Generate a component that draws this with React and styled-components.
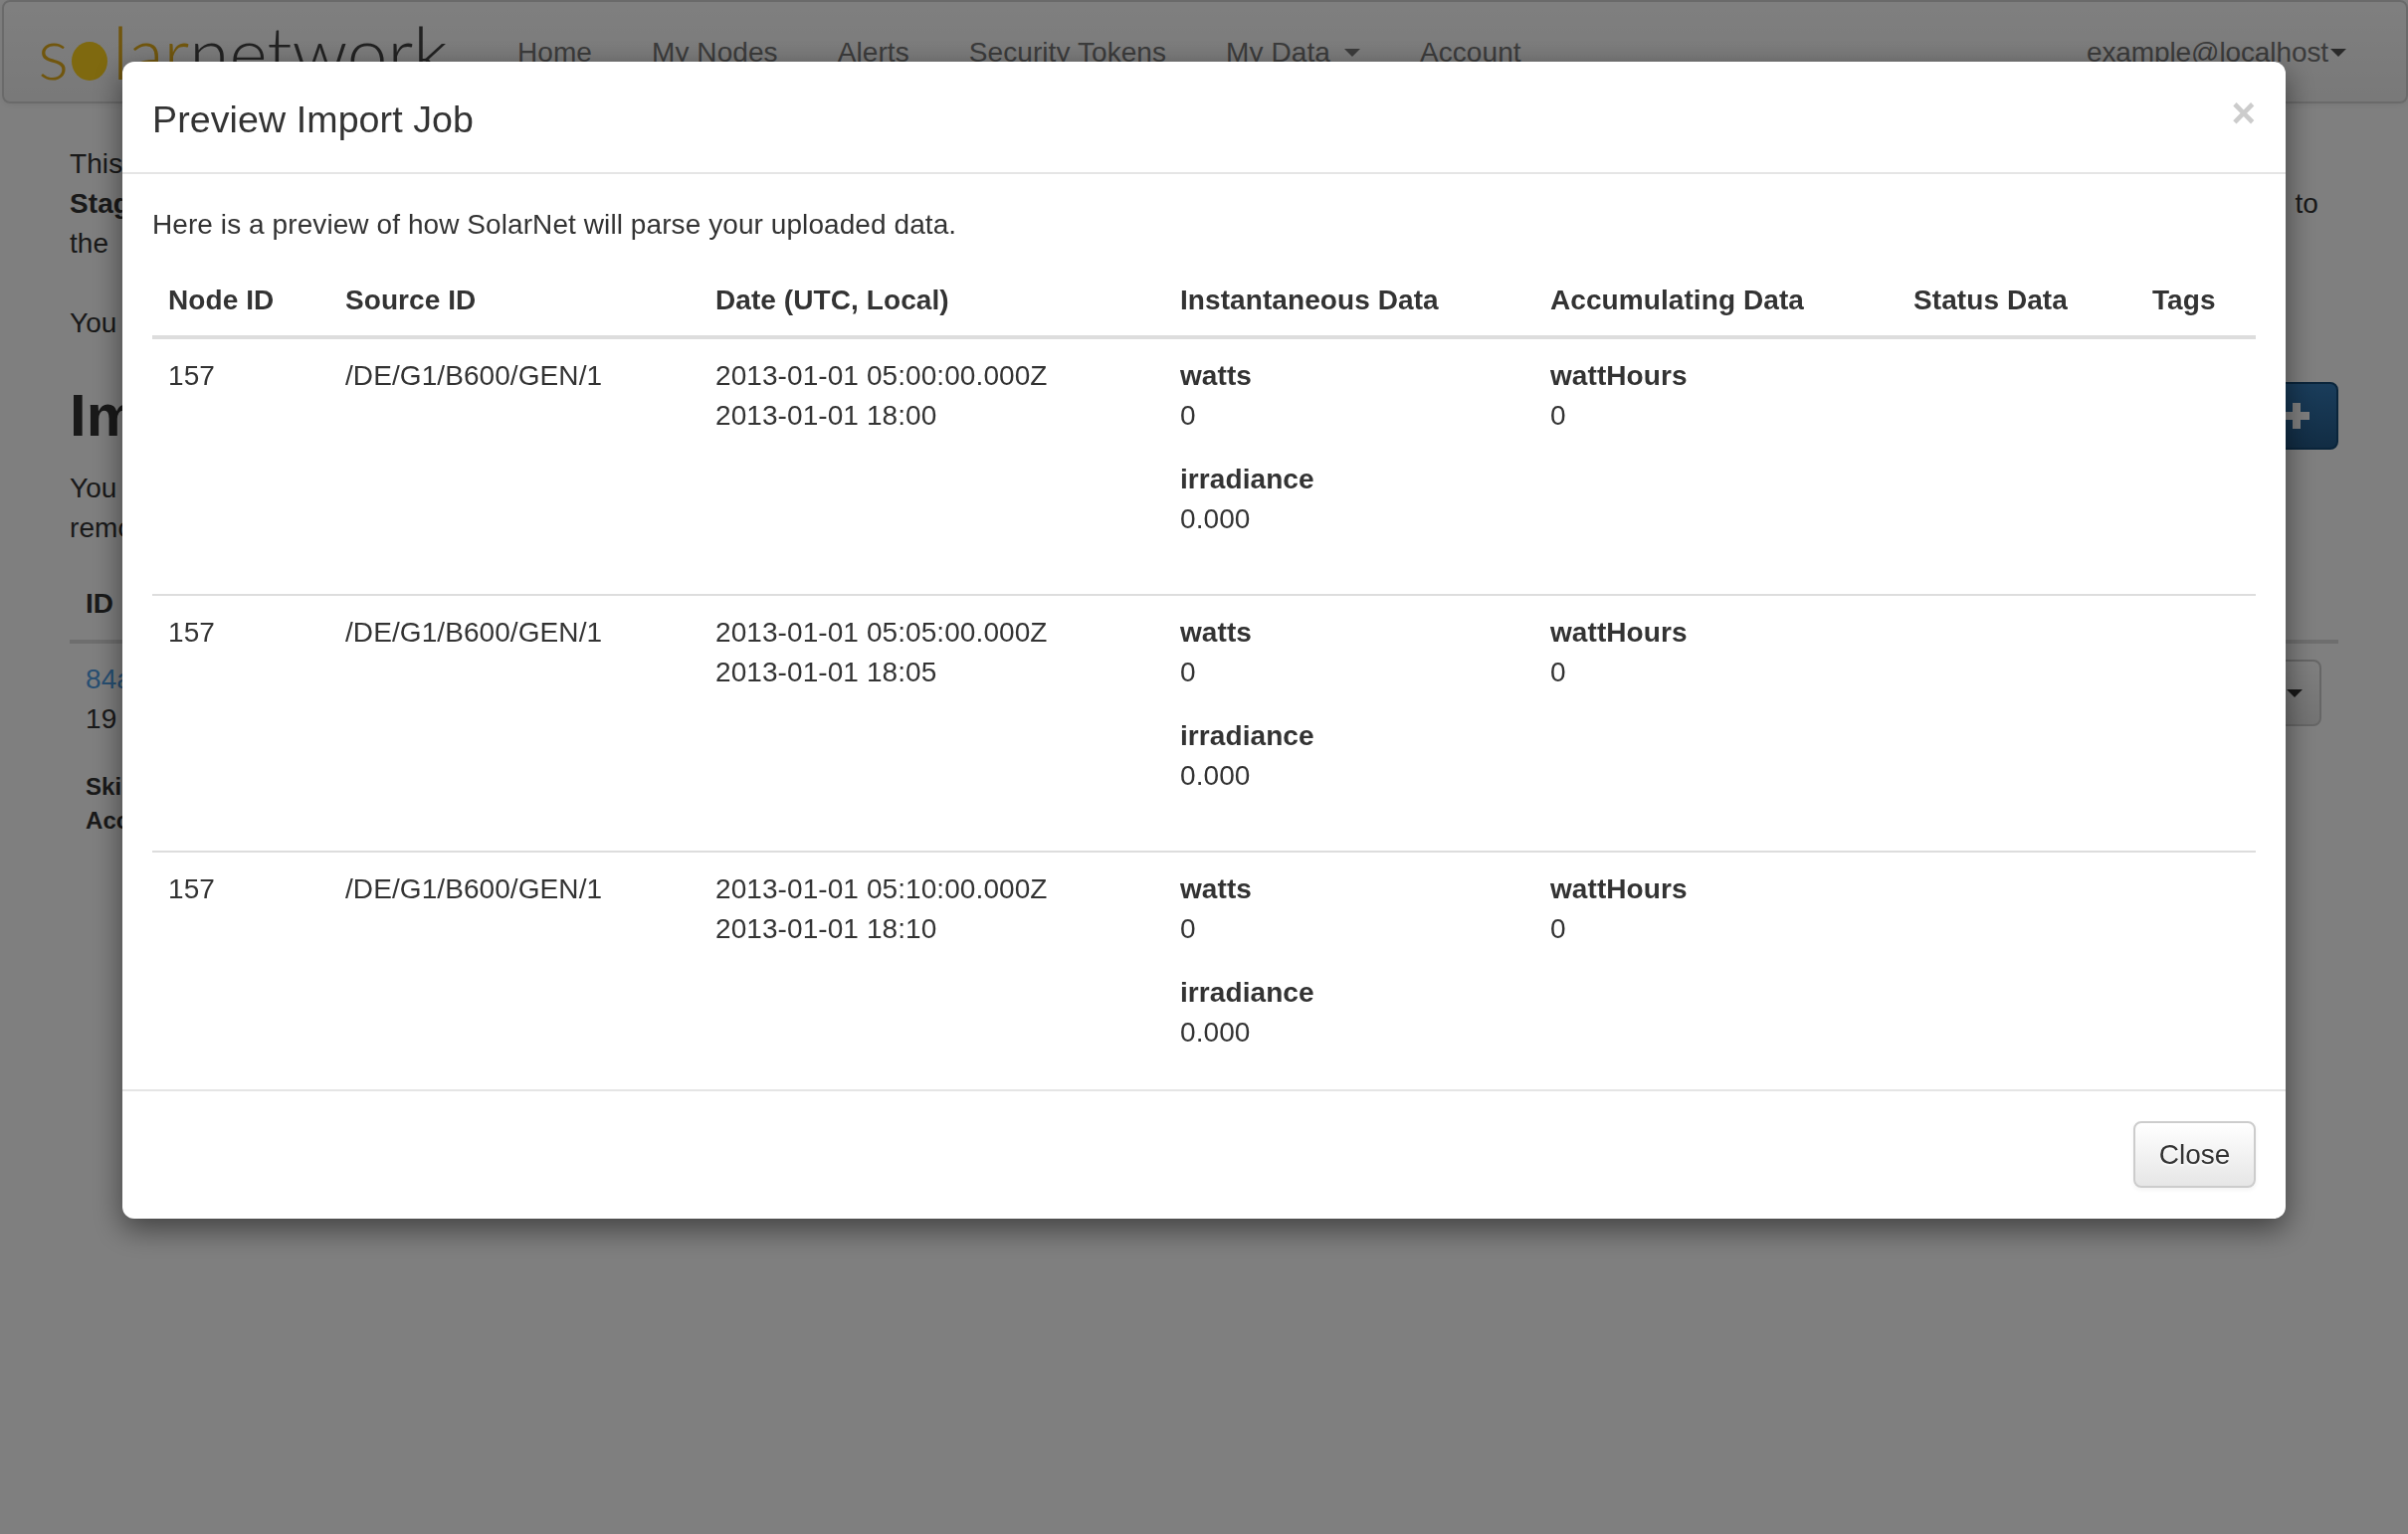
import React from 'react';
import styled, { createGlobalStyle } from 'styled-components';

const GlobalStyle = createGlobalStyle`
  html, body {
    margin: 0;
    padding: 0;
    background: #fff;
    color: #333;
    font-family: "Liberation Sans", Arial, sans-serif;
    font-size: 28px;
    line-height: 40px;
    letter-spacing: 0.08px;
  }
  body {
    height: 1542px;
    overflow: hidden;
  }
`;

const Navbar = styled.nav`
  display: flex;
  align-items: flex-start;
  height: 100px;
  margin: 0 0 0 2px;
  padding-left: 34px;
  border: 2px solid #d4d4d4;
  border-radius: 8px;
  background: linear-gradient(to bottom, #fff, #f2f2f2);
  box-shadow: 0 2px 6px rgba(0, 0, 0, 0.07);
`;

const Logo = styled.div`
  width: 452px;
  height: 100px;
  font-family: Lato, "Liberation Sans", sans-serif;
  font-weight: 300;
  font-size: 73px;
  line-height: 100px;
  letter-spacing: 0;
  color: #444;
  white-space: nowrap;
  span {
    color: #e2ad1c;
  }
`;

const LogoBall = styled.i`
  display: inline-block;
  width: 36px;
  height: 39px;
  margin: 0 5px 0 3px;
  border-radius: 50%;
  background: #ffd21e;
  vertical-align: -1px;
`;

const NavList = styled.div`
  display: flex;
  flex: 1;
  padding-top: 31px;
  color: #777;
`;

const NavItem = styled.a`
  display: flex;
  align-items: center;
  padding: 0 30px;
  white-space: nowrap;
`;

const NavUser = styled(NavItem)`
  margin-left: auto;
  padding-right: 60px;
  letter-spacing: -0.1px;
`;

const Caret = styled.b`
  display: inline-block;
  width: 0;
  height: 0;
  margin-left: ${props => props.$gap || 14}px;
  border-top: 8px solid ${props => props.$color || '#777'};
  border-left: 8px solid transparent;
  border-right: 8px solid transparent;
`;

const Main = styled.main`
  padding: 41px 70px 0;
`;

const Line = styled.div`
  display: flex;
  justify-content: space-between;
`;

const LineEnd = styled.span`
  margin-right: 20px;
`;

const Paragraph = styled.div`
  margin-bottom: ${props => props.$gap || 0}px;
`;

const HeadingRow = styled.div`
  display: flex;
  justify-content: space-between;
  align-items: center;
  margin: 39px 0 19px;
  height: 68px;
`;

const Heading = styled.h2`
  margin: 0;
  font-size: 60px;
  font-weight: 700;
  line-height: 68px;
`;

const AddButton = styled.div`
  display: flex;
  align-items: center;
  justify-content: center;
  width: 84px;
  height: 68px;
  box-sizing: border-box;
  border: 2px solid #154a76;
  border-radius: 8px;
  background: linear-gradient(to bottom, #347ab6, #245a88);
`;

const JobHead = styled.div`
  margin-top: 36px;
  padding: 0 16px 16px;
  border-bottom: 4px solid #ddd;
  font-weight: 700;
`;

const JobBody = styled.div`
  display: flex;
  justify-content: space-between;
  align-items: flex-start;
  padding: 16px 17px 0 16px;
`;

const JobLink = styled.a`
  display: block;
  color: #4f9fe6;
`;

const JobMeta = styled.div`
  margin-top: 31px;
  font-size: 24px;
  font-weight: 700;
  line-height: 34px;
`;

const MenuButton = styled.div`
  display: flex;
  align-items: center;
  justify-content: flex-end;
  width: 90px;
  height: 67px;
  box-sizing: border-box;
  padding-right: 17px;
  border: 2px solid #ccc;
  border-radius: 8px;
  background: linear-gradient(to bottom, #fff, #e6e6e6);
`;

const Backdrop = styled.div`
  position: fixed;
  inset: 0;
  background: rgba(0, 0, 0, 0.5);
`;

const Modal = styled.section`
  position: fixed;
  top: 62px;
  left: 123px;
  width: 2174px;
  border-radius: 12px;
  background: #fff;
  box-shadow: 0 10px 30px rgba(0, 0, 0, 0.5);
  overflow: hidden;
`;

const ModalHeader = styled.header`
  display: flex;
  justify-content: space-between;
  height: 111px;
  padding: 0 30px;
  border-bottom: 2px solid #e5e5e5;
`;

const ModalTitle = styled.h3`
  margin: 0;
  padding-top: 34px;
  font-size: 37.6px;
  font-weight: 400;
  line-height: 48px;
`;

const CloseIcon = styled.button`
  align-self: flex-start;
  height: 80px;
  margin: 12px 0 0;
  padding: 0;
  border: 0;
  background: none;
  color: #ccc;
  font-family: "Liberation Sans", Arial, sans-serif;
  font-size: 42px;
  font-weight: 700;
  line-height: 80px;
`;

const ModalBody = styled.div`
  height: 920px;
  box-sizing: border-box;
  padding: 31px 30px 30px;
  overflow: hidden;
`;

const Intro = styled.p`
  margin: 0 0 19px;
`;

const Table = styled.table`
  width: 2114px;
  table-layout: fixed;
  border-collapse: separate;
  border-spacing: 0;
`;

const Th = styled.th`
  box-sizing: border-box;
  width: ${props => props.$width}px;
  padding: 17px 16px 15px;
  border-bottom: 4px solid #ddd;
  font-weight: 700;
  text-align: left;
`;

const Td = styled.td`
  padding: 17px 16px 15px;
  border-top: ${props => (props.$first ? 0 : '2px solid #ddd')};
  vertical-align: top;
  white-space: nowrap;
`;

const Reading = styled.dl`
  margin: 0 0 40px;
`;

const ReadingName = styled.dt`
  font-weight: 700;
  &:not(:first-child) {
    margin-top: 24px;
  }
`;

const ReadingValue = styled.dd`
  margin: 0;
`;

const ModalFooter = styled.footer`
  display: flex;
  justify-content: flex-end;
  padding: 30px 30px 31px;
  border-top: 2px solid #e5e5e5;
`;

const Button = styled.button`
  width: 123px;
  height: 67px;
  padding: 0;
  border: 2px solid #ccc;
  border-radius: 8px;
  background: linear-gradient(to bottom, #fff, #e6e6e6);
  box-shadow: 0 2px 4px rgba(0, 0, 0, 0.05);
  color: #333;
  font-family: "Liberation Sans", Arial, sans-serif;
  font-size: 28px;
  line-height: 40px;
  text-shadow: 0 2px 2px rgba(255, 255, 255, 0.75);
`;

const columns = [
  ['Node ID', 178],
  ['Source ID', 372],
  ['Date (UTC, Local)', 467],
  ['Instantaneous Data', 372],
  ['Accumulating Data', 365],
  ['Status Data', 240],
  ['Tags', 120],
];

const rows = [
  ['2013-01-01 05:00:00.000Z', '2013-01-01 18:00'],
  ['2013-01-01 05:05:00.000Z', '2013-01-01 18:05'],
  ['2013-01-01 05:10:00.000Z', '2013-01-01 18:10'],
];

const navItems = ['Home', 'My Nodes', 'Alerts', 'Security Tokens'];

const PlusIcon = () => (
  <svg width="26" height="26" viewBox="0 0 26 26">
    <path d="M9 0h8v9h9v8h-9v9H9v-9H0V9h9z" fill="#fff" />
  </svg>
);

const App = () => (
  <>
    <GlobalStyle />
    <Navbar>
      <Logo>
        <span>s<LogoBall />lar</span>network
      </Logo>
      <NavList>
        {navItems.map(item => <NavItem key={item}>{item}</NavItem>)}
        <NavItem>My Data<Caret $gap={14} /></NavItem>
        <NavItem>Account</NavItem>
        <NavUser>example@localhost<Caret $gap={2} $color="#555" /></NavUser>
      </NavList>
    </Navbar>

    <Main>
      <Paragraph $gap={40}>
        <Line>This</Line>
        <Line>
          <strong>Stage</strong>
          <LineEnd>to</LineEnd>
        </Line>
        <Line>the</Line>
      </Paragraph>
      <Paragraph>You</Paragraph>
      <HeadingRow>
        <Heading>Import</Heading>
        <AddButton><PlusIcon /></AddButton>
      </HeadingRow>
      <div>
        <Line>You</Line>
        <Line>remove</Line>
      </div>
      <JobHead>ID</JobHead>
      <JobBody>
        <div>
          <JobLink>84a</JobLink>
          <div>19</div>
          <JobMeta>
            <div>Skipped</div>
            <div>Accumulating</div>
          </JobMeta>
        </div>
        <MenuButton><Caret $gap={0} $color="#333" /></MenuButton>
      </JobBody>
    </Main>

    <Backdrop />

    <Modal>
      <ModalHeader>
        <ModalTitle>Preview Import Job</ModalTitle>
        <CloseIcon>×</CloseIcon>
      </ModalHeader>
      <ModalBody>
        <Intro>Here is a preview of how SolarNet will parse your uploaded data.</Intro>
        <Table>
          <thead>
            <tr>
              {columns.map(([label, width]) => <Th key={label} $width={width}>{label}</Th>)}
            </tr>
          </thead>
          <tbody>
            {rows.map(([utc, local], i) => (
              <tr key={utc}>
                <Td $first={i === 0}>157</Td>
                <Td $first={i === 0}>/DE/G1/B600/GEN/1</Td>
                <Td $first={i === 0}>{utc}<br />{local}</Td>
                <Td $first={i === 0}>
                  <Reading>
                    <ReadingName>watts</ReadingName>
                    <ReadingValue>0</ReadingValue>
                    <ReadingName>irradiance</ReadingName>
                    <ReadingValue>0.000</ReadingValue>
                  </Reading>
                </Td>
                <Td $first={i === 0}>
                  <Reading>
                    <ReadingName>wattHours</ReadingName>
                    <ReadingValue>0</ReadingValue>
                  </Reading>
                </Td>
                <Td $first={i === 0} />
                <Td $first={i === 0} />
              </tr>
            ))}
          </tbody>
        </Table>
      </ModalBody>
      <ModalFooter>
        <Button>Close</Button>
      </ModalFooter>
    </Modal>
  </>
);

export default App;
